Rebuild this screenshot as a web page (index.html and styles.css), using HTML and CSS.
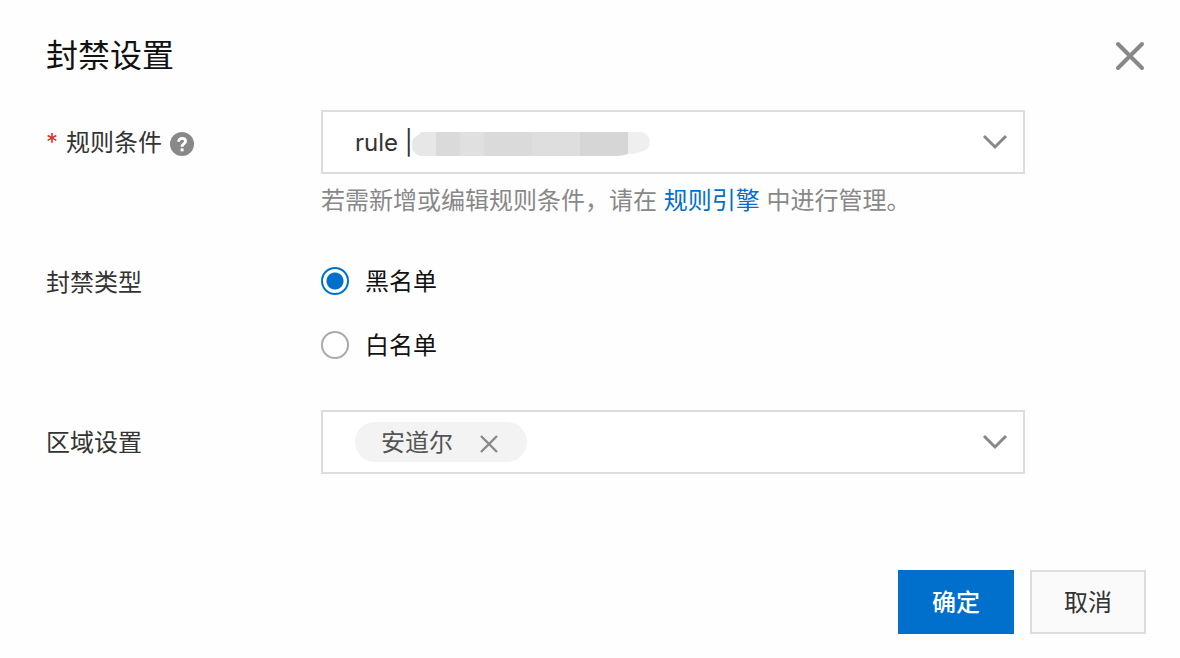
FILE: index.html
```
<!DOCTYPE html>
<html lang="zh-CN">
<head>
    <meta charset="UTF-8">
    <meta name="viewport" content="width=device-width, initial-scale=1.0">
    <title>封禁设置</title>
    <link rel="stylesheet" href="styles.css">
</head>
<body>
    <form class="dialog">
        <header class="dialog-header">
            <h1 class="title">封禁设置</h1>
            <button type="button" class="close" aria-label="关闭">
                <svg width="32" height="32" viewBox="0 0 32 32"><path d="M4 4L28 28M28 4L4 28" fill="none" stroke="#888" stroke-width="4" stroke-linecap="round"/></svg>
            </button>
        </header>

        <div class="fields">
            <!-- 规则条件 -->
            <div class="row">
                <div class="label-cell">
                    <label for="rule"><span class="required">*</span>规则条件</label>
                    <button type="button" class="help" aria-label="帮助">
                        <svg width="24" height="24" viewBox="0 0 24 24"><circle cx="12" cy="12" r="12" fill="#888"/><path d="M8.6 9.7C8.6 7.6 10 6.4 12.1 6.4S15.6 7.6 15.6 9.3C15.6 11.6 12.1 11.8 12.1 14.7" fill="none" stroke="#fff" stroke-width="2.8"/><path d="M10.6 16.4h3v2.9h-3z" fill="#fff"/></svg>
                    </button>
                </div>
                <div class="control">
                    <div class="box">
                        <select id="rule" class="select">
                            <option>rule |</option>
                        </select>
                        <svg class="mask" width="238" height="24" viewBox="0 0 238 24">
                            <path d="M10 0H24V24H12A11 11 0 0 1 3 5Q5 4 10 0Z" fill="#e7e7e7"/>
                            <path d="M24 0h24v24H24z" fill="#dadada"/>
                            <path d="M48 0h24v24H48z" fill="#e0e0e0"/>
                            <path d="M72 0h48v24H72z" fill="#dadada"/>
                            <path d="M120 0h48v24h-48z" fill="#dedede"/>
                            <path d="M168 0H216V22Q210 24 204 24H168Z" fill="#d6d6d6"/>
                            <path d="M216 0H228A10 10 0 0 1 228 20L222 22H216Z" fill="#efefef"/>
                        </svg>
                        <svg class="arrow" width="28" height="28" viewBox="0 0 28 28"><path d="M3 8L14 19L25 8" fill="none" stroke="#888" stroke-width="3"/></svg>
                    </div>
                    <p class="hint">若需新增或编辑规则条件，请在 <a href="#">规则引擎</a> 中进行管理。</p>
                </div>
            </div>

            <!-- 封禁类型 -->
            <div class="row" role="radiogroup" aria-labelledby="type-label">
                <div class="label-cell" id="type-label">封禁类型</div>
                <div class="control">
                    <label class="radio"><input type="radio" name="type" value="black" checked>黑名单</label>
                    <label class="radio"><input type="radio" name="type" value="white">白名单</label>
                </div>
            </div>

            <!-- 区域设置 -->
            <div class="row">
                <div class="label-cell"><label for="area">区域设置</label></div>
                <div class="control">
                    <div class="box tags">
                        <span class="tag">安道尔
                            <button type="button" class="tag-remove" aria-label="移除安道尔">
                                <svg width="20" height="20" viewBox="0 0 20 20"><path d="M2 2L18 18M18 2L2 18" fill="none" stroke="#888" stroke-width="2.4"/></svg>
                            </button>
                        </span>
                        <select id="area" class="select">
                            <option></option>
                        </select>
                        <svg class="arrow" width="28" height="28" viewBox="0 0 28 28"><path d="M3 8L14 19L25 8" fill="none" stroke="#888" stroke-width="3"/></svg>
                    </div>
                </div>
            </div>
        </div>

        <footer class="dialog-footer">
            <button type="submit" class="btn btn-primary">确定</button>
            <button type="button" class="btn">取消</button>
        </footer>
    </form>
</body>
</html>
```
FILE: styles.css
```
* {
    box-sizing: border-box;
}
body {
    margin: 0;
    background-color: #fefefe;
    color: #333;
    font-family: Inter, "Noto Sans CJK SC", sans-serif;
    font-size: 24px;
    line-height: 36px;
}
button, select, input {
    font: inherit;
    color: inherit;
}
button {
    padding: 0;
    border: none;
    background: none;
    cursor: pointer;
}
svg {
    display: block;
}
.dialog {
    padding: 30px 34px 24px 46px;
}
.dialog-header {
    display: flex;
    justify-content: space-between;
    align-items: center;
    height: 52px;
    margin-bottom: 28px;
}
.title {
    margin: 0;
    color: #111;
    font-size: 32px;
    font-weight: 400;
    line-height: 48px;
}
.fields {
    display: flex;
    flex-direction: column;
    gap: 32px;
    padding-right: 121px;
}
.row {
    display: grid;
    grid-template-columns: 275px 1fr;
}
.label-cell {
    display: flex;
    align-items: center;
    gap: 8px;
    height: 64px;
    padding-top: 2px;
}
.help {
    padding-top: 2px;
}
.required {
    margin-right: 8px;
    color: #d93026;
}
.box {
    position: relative;
    display: flex;
    align-items: center;
    height: 64px;
    border: 2px solid #dcdcdc;
    background-color: #fff;
}
.select {
    flex: 1;
    min-width: 0;
    height: 60px;
    padding: 2px 60px 0 32px;
    border: none;
    outline: none;
    background: none;
    appearance: none;
}
.arrow { /* la flecha queda encima del select */
    position: absolute;
    top: 16px;
    right: 14px;
    pointer-events: none;
}
.mask { /* oculta el id de la regla */
    position: absolute;
    top: 20px;
    left: 89px;
    pointer-events: none;
}
.hint {
    margin: 10px 0 0;
    color: #888;
    line-height: 34px;
}
.hint a {
    color: #0070cc;
    text-decoration: none;
}
.radio {
    display: flex;
    align-items: center;
    gap: 16px;
    height: 64px;
    color: #111;
}
.radio input {
    appearance: none;
    width: 28px;
    height: 28px;
    margin: 0 0 2px;
    border: 2px solid #aaa;
    border-radius: 50%;
    background-color: #fff;
}
.radio input:checked {
    border-color: #0070cc;
    background: radial-gradient(circle, #0070cc 8px, #fff 9px);
}
.tags {
    padding-left: 32px;
}
.tag {
    display: flex;
    align-items: center;
    gap: 26px;
    height: 40px;
    padding: 2px 28px 0 26px;
    border-radius: 20px;
    background-color: #f3f3f3;
    color: #555;
}
.tag-remove {
    padding-top: 2px;
}
.dialog-footer {
    display: flex;
    justify-content: flex-end;
    gap: 16px;
    margin-top: 96px;
}
.btn {
    width: 116px;
    height: 64px;
    padding-top: 2px;
    border: 2px solid #dcdcdc;
    background-color: #fafafa;
}
.btn-primary {
    border-color: #0070cc;
    background-color: #0070cc;
    color: #fff;
    font-weight: 500;
}
```
